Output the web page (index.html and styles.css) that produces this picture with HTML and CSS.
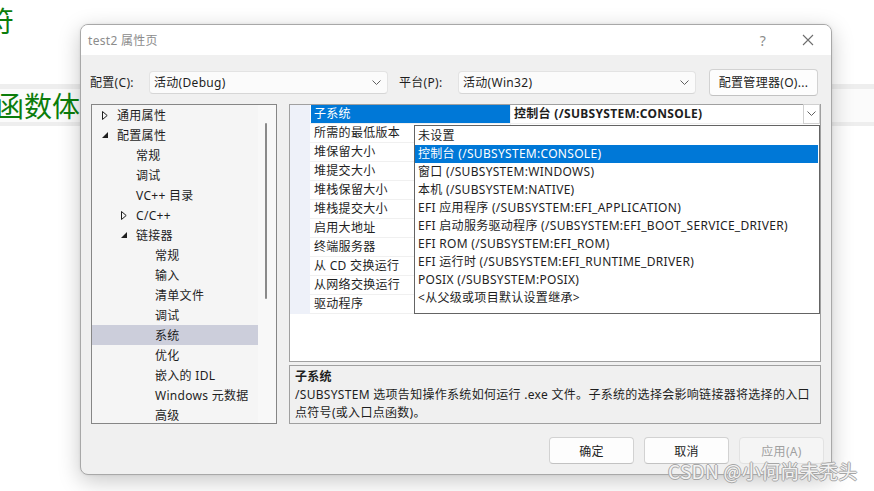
FILE: index.html
```html
<!DOCTYPE html>
<html lang="zh-CN">
<head>
<meta charset="utf-8">
<title>test2 属性页</title>
<link rel="stylesheet" href="styles.css">
</head>
<body>
<div class="page">
  <div class="bg-line">符</div>
  <div class="bg-band"><span class="bg-text">函数体</span></div>
</div>

<div class="dialog">
  <div class="titlebar">
    <span class="title">test2 属性页</span>
    <span class="help">?</span>
    <span class="close"><svg width="12" height="12" viewBox="0 0 12 12"><path d="M1 1L11 11M11 1L1 11" stroke="#6e6e6e" stroke-width="1.1" fill="none"/></svg></span>
  </div>
  <div class="body">
    <div class="config-row">
      <span class="lbl">配置(C):</span>
      <div class="select sel1"><span>活动(Debug)</span><svg class="chev" width="9" height="5" viewBox="0 0 9 5"><polyline points="0.5,0.5 4.5,4.5 8.5,0.5" stroke="#606060" fill="none"/></svg></div>
      <span class="lbl lbl2">平台(P):</span>
      <div class="select sel2"><span>活动(Win32)</span><svg class="chev" width="9" height="5" viewBox="0 0 9 5"><polyline points="0.5,0.5 4.5,4.5 8.5,0.5" stroke="#606060" fill="none"/></svg></div>
      <button class="btn mgr">配置管理器(O)...</button>
    </div>

    <div class="main">
      <div class="tree">
        <div class="tree-list">
          <div class="trow l0"><span class="arr"><svg width="6" height="9" viewBox="0 0 6 9"><polygon points="0.5,0.5 5.2,4.5 0.5,8.5" stroke="#1e1e1e" fill="none"/></svg></span><span>通用属性</span></div>
          <div class="trow l0"><span class="arr"><svg width="6" height="6" viewBox="0 0 6 6"><polygon points="6,0 6,6 0,6" fill="#1e1e1e"/></svg></span><span>配置属性</span></div>
          <div class="trow l1"><span class="arr"></span><span>常规</span></div>
          <div class="trow l1"><span class="arr"></span><span>调试</span></div>
          <div class="trow l1"><span class="arr"></span><span>VC++ 目录</span></div>
          <div class="trow l1"><span class="arr"><svg width="6" height="9" viewBox="0 0 6 9"><polygon points="0.5,0.5 5.2,4.5 0.5,8.5" stroke="#1e1e1e" fill="none"/></svg></span><span>C/C++</span></div>
          <div class="trow l1"><span class="arr"><svg width="6" height="6" viewBox="0 0 6 6"><polygon points="6,0 6,6 0,6" fill="#1e1e1e"/></svg></span><span>链接器</span></div>
          <div class="trow l2"><span class="arr"></span><span>常规</span></div>
          <div class="trow l2"><span class="arr"></span><span>输入</span></div>
          <div class="trow l2"><span class="arr"></span><span>清单文件</span></div>
          <div class="trow l2"><span class="arr"></span><span>调试</span></div>
          <div class="trow l2 sel"><span class="arr"></span><span>系统</span></div>
          <div class="trow l2"><span class="arr"></span><span>优化</span></div>
          <div class="trow l2"><span class="arr"></span><span>嵌入的 IDL</span></div>
          <div class="trow l2"><span class="arr"></span><span>Windows 元数据</span></div>
          <div class="trow l2"><span class="arr"></span><span>高级</span></div>
        </div>
        <div class="scrollbar"><div class="thumb"></div></div>
      </div>

      <div class="right">
        <div class="grid">
          <div class="margin-col"></div>
          <div class="rows">
            <div class="prow"><div class="pname active">子系统</div><div class="pval"><b>控制台 (/SUBSYSTEM:CONSOLE)</b><span class="ddbtn"><svg width="9" height="5" viewBox="0 0 9 5"><polyline points="0.5,0.5 4.5,4.5 8.5,0.5" stroke="#606060" fill="none"/></svg></span></div></div>
            <div class="prow"><div class="pname">所需的最低版本</div><div class="pval"></div></div>
            <div class="prow"><div class="pname">堆保留大小</div><div class="pval"></div></div>
            <div class="prow"><div class="pname">堆提交大小</div><div class="pval"></div></div>
            <div class="prow"><div class="pname">堆栈保留大小</div><div class="pval"></div></div>
            <div class="prow"><div class="pname">堆栈提交大小</div><div class="pval"></div></div>
            <div class="prow"><div class="pname">启用大地址</div><div class="pval"></div></div>
            <div class="prow"><div class="pname">终端服务器</div><div class="pval"></div></div>
            <div class="prow"><div class="pname">从 CD 交换运行</div><div class="pval"></div></div>
            <div class="prow"><div class="pname">从网络交换运行</div><div class="pval"></div></div>
            <div class="prow"><div class="pname">驱动程序</div><div class="pval"></div></div>
          </div>
          <div class="dropdown">
            <div class="ditem">未设置</div>
            <div class="ditem on">控制台 (/SUBSYSTEM:CONSOLE)</div>
            <div class="ditem">窗口 (/SUBSYSTEM:WINDOWS)</div>
            <div class="ditem">本机 (/SUBSYSTEM:NATIVE)</div>
            <div class="ditem">EFI 应用程序 (/SUBSYSTEM:EFI_APPLICATION)</div>
            <div class="ditem">EFI 启动服务驱动程序 (/SUBSYSTEM:EFI_BOOT_SERVICE_DRIVER)</div>
            <div class="ditem">EFI ROM (/SUBSYSTEM:EFI_ROM)</div>
            <div class="ditem">EFI 运行时 (/SUBSYSTEM:EFI_RUNTIME_DRIVER)</div>
            <div class="ditem">POSIX (/SUBSYSTEM:POSIX)</div>
            <div class="ditem">&lt;从父级或项目默认设置继承&gt;</div>
          </div>
        </div>
        <div class="desc">
          <div class="desc-title">子系统</div>
          <div class="desc-text">/SUBSYSTEM 选项告知操作系统如何运行 .exe 文件。子系统的选择会影响链接器将选择的入口点符号(或入口点函数)。</div>
        </div>
      </div>
    </div>

    <div class="buttons">
      <button class="btn act">确定</button>
      <button class="btn act">取消</button>
      <button class="btn act disabled">应用(A)</button>
    </div>
  </div>
</div>

<div class="watermark">CSDN @小何尚未秃头</div>
</body>
</html>
```

FILE: styles.css
```css
* { box-sizing: border-box; }

html, body {
  margin: 0;
  padding: 0;
  background: #ffffff;
  width: 874px;
  height: 491px;
  overflow: hidden;
}

body {
  font-family: "Noto Sans", "Noto Sans CJK SC", sans-serif;
  font-size: 12px;
  color: #1e1e1e;
  position: relative;
  letter-spacing: 0.3px;
}

/* background document */
.page {
  width: 874px;
  letter-spacing: 0;
}
.bg-line {
  height: 40px;
  line-height: 40px;
  font-size: 28px;
  color: #0b7d0b;
  margin-left: -14px;
  font-family: "Noto Sans CJK SC", sans-serif;
}
.bg-band {
  margin-top: 44px;
  height: 42px;
  border-top: 5px solid #eeeeee;
  border-bottom: 4px solid #eeeeee;
  background: #fbfbfb;
  line-height: 32px;
  font-size: 28px;
  color: #0b7d0b;
  font-family: "Noto Sans CJK SC", sans-serif;
}
.bg-text { margin-left: -4px; }

/* dialog window */
.dialog {
  position: absolute;
  left: 80px;
  top: 24px;
  width: 752px;
  height: 451px;
  background: #f0f0f0;
  border: 1px solid #a8a8a8;
  border-radius: 8px;
  box-shadow: 0 6px 22px rgba(0, 0, 0, 0.22), 0 0 3px rgba(0,0,0,0.08);
  overflow: hidden;
}

.titlebar {
  height: 30px;
  background: #ffffff;
  display: flex;
  align-items: center;
  padding-left: 7px;
}
.title {
  color: #8c8c8c;
  font-size: 12px;
  flex: 1;
}
.help {
  color: #8c8c8c;
  font-size: 14px;
  width: 14px;
  text-align: center;
  margin-right: 32px;
}
.close {
  width: 12px;
  height: 12px;
  margin-right: 17px;
  display: flex;
}

.body {
  padding: 13px 10px 0 10px;
}

.config-row {
  height: 28px;
  display: flex;
  align-items: center;
}
.lbl {
  width: 59px;
  margin-left: -1px;
  padding-left: 0;
}
.lbl2 { margin-left: 11px; width: 59px; }
.select {
  height: 23px;
  background: #fbfbfb;
  border: 1px solid #e3e3e3;
  border-bottom-color: #d6d6d6;
  border-radius: 4px;
  display: flex;
  align-items: center;
  justify-content: space-between;
  padding: 0 6px 0 4px;
}
.sel1 { width: 239px; }
.sel2 { width: 238px; }
.chev { margin-top: 1px; }

.btn {
  font-family: inherit;
  font-size: 12px;
  letter-spacing: 0.3px;
  color: #1e1e1e;
  background: #fdfdfd;
  border: 1px solid #d2d2d2;
  border-bottom-color: #c2c2c2;
  border-radius: 4px;
  height: 27px;
  padding: 0;
}
.mgr {
  margin-left: 13px;
  width: 109px;
}

.main {
  margin-top: 8px;
  height: 320px;
  display: flex;
  gap: 12px;
}

/* tree */
.tree {
  width: 186px;
  height: 320px;
  border: 1px solid #868686;
  background: #f5f5f5;
  display: flex;
  overflow: hidden;
}
.tree-list {
  width: 166px;
  height: 100%;
  overflow: hidden;
}
.trow {
  height: 20px;
  display: flex;
  align-items: center;
  white-space: nowrap;
}
.trow.l0 { padding-left: 6px; }
.trow.l1 { padding-left: 25px; }
.trow.l2 { padding-left: 44px; }
.trow .arr {
  width: 14px;
  height: 20px;
  margin-right: 5px;
  display: flex;
  align-items: center;
  justify-content: center;
}
.trow.sel { background: #cccedb; }
.scrollbar {
  width: 18px;
  height: 100%;
  background: #f8f8f8;
  position: relative;
}
.thumb {
  position: absolute;
  left: 7px;
  top: 18px;
  width: 2px;
  height: 176px;
  background: #8a8a8a;
  border-radius: 1px;
}

/* right column */
.right {
  width: 532px;
  display: flex;
  flex-direction: column;
  gap: 3px;
}
.grid {
  height: 258px;
  border: 1px solid #a0a0a0;
  background: #ffffff;
  display: flex;
  position: relative;
}
.margin-col {
  width: 20px;
  height: 209px;
  background: #eef1f9;
}
.rows { flex: 1; }
.prow {
  height: 19px;
  display: flex;
  border-bottom: 1px solid #f0f0f0;
}
.pname {
  width: 200px;
  padding-left: 4px;
  line-height: 18px;
  white-space: nowrap;
  overflow: hidden;
}
.pname.active {
  background: #0078d7;
  color: #ffffff;
  margin-left: 1px;
  width: 199px;
  padding-left: 3px;
}
.pval {
  flex: 1;
  display: flex;
  align-items: center;
  justify-content: space-between;
  padding-left: 3px;
  border-left: 1px solid #f0f0f0;
}
.pval b { font-weight: 700; line-height: 18px; }
.ddbtn {
  width: 17px;
  height: 20px;
  margin-top: -1px;
  border: 1px solid #d0d0d0;
  background: #ffffff;
  display: flex;
  align-items: center;
  justify-content: center;
}

.dropdown {
  position: absolute;
  left: 124px;
  top: 20px;
  width: 406px;
  height: 189px;
  background: #ffffff;
  border: 1px solid #646464;
  padding-top: 1px;
}
.ditem {
  height: 18px;
  line-height: 18px;
  padding-left: 3px;
  white-space: nowrap;
}
.ditem.on {
  background: #0078d7;
  color: #ffffff;
  margin-right: 1px;
}

.desc {
  height: 59px;
  border: 1px solid #a0a0a0;
  background: #f0f0f0;
  padding: 2px 0 0 5px;
  line-height: 18px;
}
.desc-title { font-weight: 700; }
.desc-text { width: 521px; }

.buttons {
  margin-top: 13px;
  margin-right: -3px;
  display: flex;
  justify-content: flex-end;
  gap: 10px;
}
.act { width: 85px; }
.disabled {
  color: #a0a0a0;
  background: #f5f5f5;
  border-color: #e2e2e2;
}

.watermark {
  position: absolute;
  left: 668px;
  top: 458px;
  font-family: "Noto Sans CJK SC", sans-serif;
  font-size: 19px;
  line-height: 26px;
  letter-spacing: 0.3px;
  color: #f2f2f2;
  text-shadow: 1px 0 0 #a6a6a6, -1px 0 0 #a6a6a6, 0 1px 0 #a6a6a6, 0 -1px 0 #a6a6a6;
  white-space: nowrap;
}
```
